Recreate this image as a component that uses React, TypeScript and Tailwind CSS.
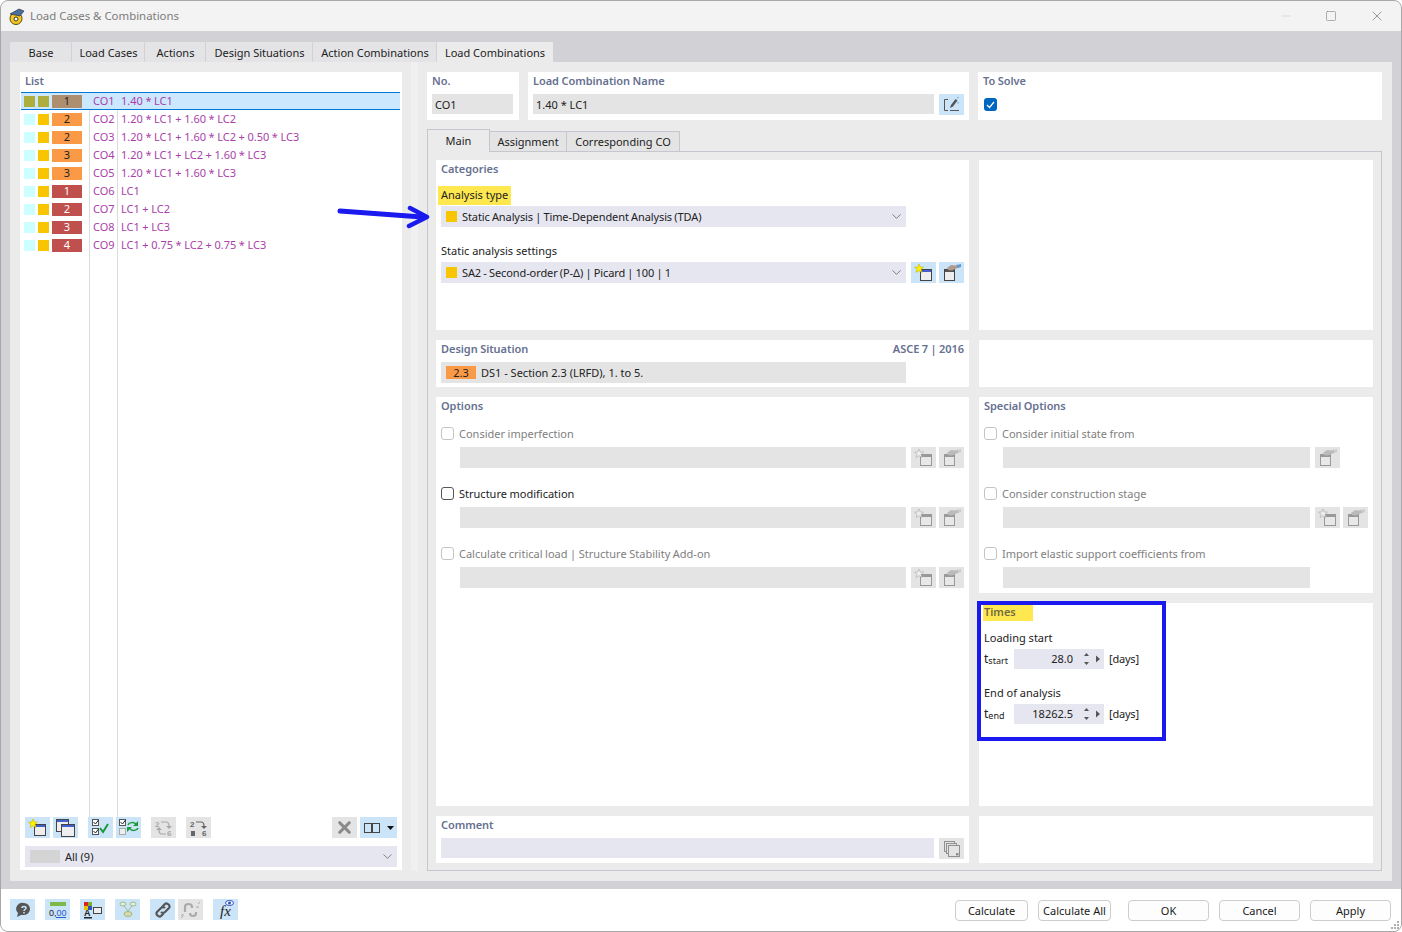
import React from 'react';
import { ChevronDown, Minus, Square, X } from 'lucide-react';

const rows = [
    { c1: '#aeae3e', c2: '#aeae3e', n: '1', bg: '#ad8f70', dark: true, co: 'CO1', f: '1.40 * LC1' },
    { c1: '#ccffff', c2: '#f8c600', n: '2', bg: '#fb9a46', dark: true, co: 'CO2', f: '1.20 * LC1 + 1.60 * LC2' },
    { c1: '#ccffff', c2: '#f8c600', n: '2', bg: '#fb9a46', dark: true, co: 'CO3', f: '1.20 * LC1 + 1.60 * LC2 + 0.50 * LC3' },
    { c1: '#ccffff', c2: '#f8c600', n: '3', bg: '#fb9a46', dark: true, co: 'CO4', f: '1.20 * LC1 + LC2 + 1.60 * LC3' },
    { c1: '#ccffff', c2: '#f8c600', n: '3', bg: '#fb9a46', dark: true, co: 'CO5', f: '1.20 * LC1 + 1.60 * LC3' },
    { c1: '#ccffff', c2: '#f8c600', n: '1', bg: '#c0504d', dark: false, co: 'CO6', f: 'LC1' },
    { c1: '#ccffff', c2: '#f8c600', n: '2', bg: '#c0504d', dark: false, co: 'CO7', f: 'LC1 + LC2' },
    { c1: '#ccffff', c2: '#f8c600', n: '3', bg: '#c0504d', dark: false, co: 'CO8', f: 'LC1 + LC3' },
    { c1: '#ccffff', c2: '#f8c600', n: '4', bg: '#c0504d', dark: false, co: 'CO9', f: 'LC1 + 0.75 * LC2 + 0.75 * LC3' },
];

// --- small toolbar drawings ---
const NewIcon = ({ off }: { off?: boolean }) => (
    <svg width="19" height="17" viewBox="0 0 19 17">
        <rect x="6.500" y="5.500" width="11" height="11" fill={off ? '#e8e8e8' : '#eee'} stroke={off ? '#999' : '#444'} />
        <rect x="7" y="6" width="10" height="2" fill={off ? '#999' : '#4060d0'} />
        <path d="M5 0l1.300 3 3.200.2-2.500 2.100.9 3.200L5 6.700 2.100 8.500 3 5.300.5 3.200l3.200-.2z" fill={off ? '#eee' : '#fff200'} stroke={off ? '#aaa' : '#c8b400'} strokeWidth=".6" />
    </svg>
);

const EditIcon = ({ off }: { off?: boolean }) => (
    <svg width="20" height="17" viewBox="0 0 20 17">
        <rect x="2.500" y="5.500" width="10" height="11" fill={off ? '#e8e8e8' : '#eee'} stroke={off ? '#999' : '#444'} />
        <rect x="3" y="6" width="9" height="2" fill={off ? '#999' : '#555'} />
        <path d="M5 4l4-3 4 .5 3-1 1 3-4 1.500-3 1.500-4-.5z" fill={off ? '#bbb' : '#b09a90'} />
        <path d="M15 1l4-1v3l-3 1z" fill={off ? '#ccc' : '#5a9ad8'} />
    </svg>
);

const PenIcon = () => (
    <svg width="18" height="16" viewBox="0 0 18 16" fill="none">
        <path d="M5 2.500H1.500v11H5M7 13.500h9" stroke="#555" />
        <path d="M7 11l1-3 4.500-6 2 1.500-4.500 6z" fill="#555" />
        <path d="M14 1l1.500-.5M15 5v1.500" stroke="#5a9ad8" />
    </svg>
);

const TwoWindows = () => (
    <svg width="19" height="18" viewBox="0 0 19 18" fill="none" stroke="#444">
        <rect x=".5" y=".5" width="12" height="12" fill="#eee" />
        <path d="M1 2h11" stroke="#4060d0" strokeWidth="2" />
        <rect x="5.500" y="5.500" width="13" height="12" fill="#eee" />
        <path d="M6 7h12" stroke="#4060d0" strokeWidth="2" />
    </svg>
);

const StackIcon = () => (
    <svg width="16" height="16" viewBox="0 0 16 16" fill="none" stroke="#909090">
        <rect x=".5" y=".5" width="10" height="10" fill="#e4e4e4" />
        <rect x="2.500" y="2.500" width="10" height="10" fill="#e4e4e4" />
        <rect x="4.500" y="4.500" width="11" height="11" fill="#e4e4e4" />
        <rect x="12" y="12" width="2.500" height="2.500" fill="#909090" stroke="none" />
    </svg>
);

const CheckAllIcon = () => (
    <svg width="18" height="17" viewBox="0 0 18 17" fill="none">
        <rect x=".5" y=".5" width="6" height="6" stroke="#555" fill="#fff" />
        <rect x=".5" y="9.500" width="6" height="6" stroke="#555" fill="#fff" />
        <path d="M1.500 3l2 2 3-4M1.500 12l2 2 3-4" stroke="#222" />
        <path d="M8 9l3 4 5-8" stroke="#1b9a3c" strokeWidth="2" />
    </svg>
);

const CheckSwapIcon = () => (
    <svg width="20" height="17" viewBox="0 0 20 17" fill="none">
        <rect x=".5" y=".5" width="6" height="6" stroke="#555" fill="#fff" />
        <rect x=".5" y="9.500" width="6" height="6" stroke="#aaa" fill="#eee" />
        <path d="M1.500 3l2 2 3-4" stroke="#222" />
        <path d="M9 6c1-3 6-3 8-1M19 9c-1 3-6 3-8 1" stroke="#1b9a3c" strokeWidth="1.500" />
        <path d="M19 2v5h-5zM8 13V8h5z" fill="#1b9a3c" />
    </svg>
);

const RenumberIcon = ({ dim }: { dim?: boolean }) => {
    const col = dim ? '#a8a8a8' : '#666';
    return (
        <svg width="20" height="18" viewBox="0 0 20 18" fill="none" stroke={col}>
            <text x="1" y="8" fontSize="8" fontWeight="bold" fontFamily="Liberation Sans" fill={col} stroke="none">2</text>
            <text x="13" y="17" fontSize="8" fontWeight="bold" fontFamily="Liberation Sans" fill={col} stroke="none">6</text>
            <path d="M7 3h5c2 0 3 1 3 4" strokeWidth="1.200" />
            <path d="M12 7h6l-3 3z" fill={col} stroke="none" />
            {dim ? (
                <>
                    <path d="M12 15H8c-2 0-3-1-3-4" strokeWidth="1.200" />
                    <path d="M2 11h6l-3-3z" fill={col} stroke="none" />
                </>
            ) : (
                <rect x="2" y="12" width="4" height="5" fill={col} stroke="none" />
            )}
        </svg>
    );
};

const LinkIcon = ({ broken }: { broken?: boolean }) => (
    <svg width="20" height="18" viewBox="0 0 20 18" fill="none" stroke={broken ? '#aaa' : '#555'} strokeWidth="2.200">
        {broken ? (
            <>
                <path d="M4 11V6c0-4 7-4 7 0v1M15 11v1c0 4-6 4-6 0" />
                <path d="M2 15l-2 2M17 3l2-2M15 6h3M3 14H0" strokeWidth="1" />
            </>
        ) : (
            <path d="M9 6l3-3c2-2 6 2 4 4l-4 4c-1 1-3 1-4 0M11 12l-3 3c-2 2-6-2-4-4l4-4c1-1 3-1 4 0" />
        )}
    </svg>
);

const ToolBtn = ({ children, off, className = 'w-[25px]' }: { children?: React.ReactNode; off?: boolean; className?: string }) => (
    <div className={`h-[21px] shrink-0 flex items-center justify-center ${off ? 'bg-[#e4e4e4]' : 'bg-[#cce4f7]'} ${className}`}>
        {children}
    </div>
);

const Section = ({ className = '', title, children }: { className?: string; title?: string; children?: React.ReactNode }) => (
    <div className={`bg-white px-[5px] ${className}`}>
        {title && <div className="h-[19px] pt-px leading-[15px] font-semibold text-[#667090] tracking-[-0.05px] [word-spacing:-0.300px]">{title}</div>}
        {children}
    </div>
);

const Combo = ({ text, className = '' }: { text: string; className?: string }) => (
    <div className={`h-[21px] w-[465px] bg-[#e6e6f0] flex items-center pl-[5px] pr-[2px] ${className}`}>
        <span className="w-[11px] h-[11px] bg-[#f8c600] mr-[5px]" />
        <span className="flex-1 text-[#222] tracking-[-0.100px] [word-spacing:-0.500px]">{text}</span>
        <ChevronDown size={15} strokeWidth={1} className="text-[#444]" />
    </div>
);

const CheckRow = ({ label, on, fieldW, buttons }: { label: string; on?: boolean; fieldW: string; buttons: ('new' | 'edit')[] }) => (
    <div className="h-[60px] pt-[11px]">
        <div className="flex items-center h-[13px]">
            <span className={`w-[13px] h-[13px] rounded-[3px] border bg-white ${on ? 'border-[#555]' : 'border-[#c4c4c4]'}`} />
            <span className={`ml-[5px] [word-spacing:-0.300px] ${on ? 'text-[#222]' : 'text-[#808080]'}`}>{label}</span>
        </div>
        <div className="flex mt-[7px] ml-[19px]">
            <div className={`h-[21px] bg-[#e4e4e4] ${fieldW}`} />
            <div className="flex gap-[3px] ml-[5px]">
                {buttons.map((b, i) => (
                    <ToolBtn key={i} off>{b === 'new' ? <NewIcon off /> : <EditIcon off />}</ToolBtn>
                ))}
            </div>
        </div>
    </div>
);

const Spinner = ({ sym, sub, value }: { sym: string; sub: string; value: string }) => (
    <div className="flex items-center h-[20px]">
        <span className="w-[30px] text-[#222] text-[12px]">{sym}<span className="text-[9px] relative top-px">{sub}</span></span>
        <div className="w-[90px] h-[20px] bg-[#e6e6f0] flex items-center justify-end pr-[3px]">
            <span className="text-[#222] mr-[8px]">{value}</span>
            <svg width="20" height="14" viewBox="0 0 20 14" fill="#555">
                <path d="M3 4l2.500-3L8 4zM3 10l2.500 3L8 10zM15 3.500l4 3.500-4 3.500z" />
            </svg>
        </div>
        <span className="ml-[5px] text-[#222] tracking-[-0.200px]">[days]</span>
    </div>
);

const Tab = ({ label, w }: { label: string; w: string }) => (
    <div className={`h-[20px] pt-[2px] pl-px flex items-center justify-center bg-[#e4e4e6] text-[#222] mr-px ${w}`}>{label}</div>
);

const FootBtn = ({ label, w, ml }: { label: string; w: string; ml: string }) => (
    <div className={`h-[21px] mt-px pt-px flex items-center justify-center rounded-[4px] border border-[#cdcdcd] bg-[#fdfdfd] text-[#1a1a1a] ${w} ${ml}`}>{label}</div>
);

export default function App() {
    return (
        <div
            className="relative w-[1402px] h-[932px] overflow-hidden rounded-[8px] border border-[#a8a8a8] bg-[#d2d2d6] flex flex-col text-[11px] leading-[14px]"
            style={{ fontFamily: '"Noto Sans", "Open Sans", sans-serif' }}
        >
            {/* title bar */}
            <div className="h-[30px] shrink-0 bg-[#f3f3f3] flex items-center pl-[7px] pr-[16px]">
                <svg width="17" height="17" viewBox="0 0 17 17">
                    <circle cx="8" cy="10.500" r="6" fill="#f4c81c" stroke="#5a4a10" />
                    <path d="M2 6l9-5 5 2-4 5z" fill="#4a6fa0" stroke="#223" strokeWidth=".6" />
                    <circle cx="8" cy="11" r="2" fill="#fff" stroke="#333" />
                </svg>
                <span className="ml-[5px] text-[11.400px] text-[#7b7b7b] flex-1">Load Cases &amp; Combinations</span>
                <Minus size={14} strokeWidth={1} className="text-[#c8c8c8] mr-[32px]" />
                <Square size={12} strokeWidth={1.200} className="text-[#808080] mr-[32px]" />
                <X size={16} strokeWidth={1.200} className="text-[#808080]" />
            </div>

            {/* top tabs */}
            <div className="h-[31px] shrink-0 pt-[11px] px-[9px] flex">
                <Tab label="Base" w="w-[61px]" />
                <Tab label="Load Cases" w="w-[72px]" />
                <Tab label="Actions" w="w-[60px]" />
                <Tab label="Design Situations" w="w-[106px]" />
                <Tab label="Action Combinations" w="w-[123px]" />
                <div className="h-[20px] pt-[2px] w-[116px] flex items-center justify-center bg-[#ebebeb] text-[#222]">Load Combinations</div>
            </div>

            {/* main area */}
            <div className="h-[819px] shrink-0 mx-[9px] bg-[#ebebeb] flex pt-[10px]">
                {/* left list */}
                <div className="w-[382px] h-[798px] ml-[10px] bg-white flex flex-col px-[5px] shrink-0">
                    <div className="h-[20px] pt-px leading-[15px] font-semibold text-[#667090]">List</div>
                    <div className="relative h-[725px] -mx-[4px]">
                        <div className="absolute top-0 bottom-0 left-[68px] w-px bg-[#dcdcdc]" />
                        <div className="absolute top-0 bottom-0 left-[96px] w-px bg-[#dcdcdc]" />
                        {rows.map((r, i) => (
                            <div
                                key={r.co}
                                className={`relative h-[18px] flex items-center text-[#a93fa9] ${i === 0 ? 'bg-[#cce8ff] border-y border-[#0078d4] mr-px' : ''}`}
                            >
                                <span className="w-[11px] h-[11px] ml-[3px]" style={{ backgroundColor: r.c1 }} />
                                <span className="w-[11px] h-[11px] ml-[3px]" style={{ backgroundColor: r.c2 }} />
                                <span
                                    className={`w-[30px] h-[13px] ml-[3px] flex items-center justify-center ${r.dark ? 'text-[#222]' : 'text-white'}`}
                                    style={{ backgroundColor: r.bg }}
                                >
                                    {r.n}
                                </span>
                                <span className="w-[28px] ml-[11px]">{r.co}</span>
                                <span className="[word-spacing:-0.300px]">{r.f}</span>
                            </div>
                        ))}
                    </div>
                    <div className="flex">
                        <ToolBtn><NewIcon /></ToolBtn>
                        <ToolBtn className="w-[25px] ml-[3px]"><TwoWindows /></ToolBtn>
                        <ToolBtn className="w-[25px] ml-[10px]"><CheckAllIcon /></ToolBtn>
                        <ToolBtn className="w-[25px] ml-[3px]"><CheckSwapIcon /></ToolBtn>
                        <ToolBtn off className="w-[25px] ml-[10px]"><RenumberIcon dim /></ToolBtn>
                        <ToolBtn off className="w-[25px] ml-[10px]"><RenumberIcon /></ToolBtn>
                        <ToolBtn off className="w-[25px] ml-auto">
                            <X size={19} strokeWidth={4} className="text-[#8a8a8a]" />
                        </ToolBtn>
                        <ToolBtn className="w-[37px] ml-[3px] gap-[7px]">
                            <svg width="16" height="10" viewBox="0 0 16 10" fill="none" stroke="#444">
                                <rect x=".5" y=".5" width="7" height="9" />
                                <rect x="8.500" y=".5" width="7" height="9" />
                            </svg>
                            <svg width="7" height="4" viewBox="0 0 7 4"><path d="M0 0h7L3.500 4z" fill="#111" /></svg>
                        </ToolBtn>
                    </div>
                    <div className="h-[21px] mt-[8px] bg-[#e6e6f0] flex items-center pl-[5px] pr-[2px]">
                        <span className="w-[30px] h-[13px] bg-[#d4d4d4] mr-[5px]" />
                        <span className="flex-1 text-[#222]">All (9)</span>
                        <ChevronDown size={15} strokeWidth={1} className="text-[#444]" />
                    </div>
                </div>

                {/* splitter */}
                <div className="w-[7px] h-[809px] ml-[9px] -mt-[10px] bg-[#f0f0f0] shrink-0" />

                {/* right side */}
                <div className="ml-[9px] flex-1 min-w-0 pr-[8px]">
                    <div className="flex h-[48px]">
                        <Section title="No." className="w-[92px]">
                            <div className="h-[20px] mt-[3px] pt-px w-[81px] bg-[#e4e4e4] flex items-center pl-[3px] text-[#222]">CO1</div>
                        </Section>
                        <Section title="Load Combination Name" className="w-[441px] ml-[9px]">
                            <div className="flex mt-[3px]">
                                <div className="h-[20px] pt-px w-[401px] bg-[#e4e4e4] flex items-center pl-[3px] text-[#222]">1.40 * LC1</div>
                                <ToolBtn className="w-[25px] ml-[5px]"><PenIcon /></ToolBtn>
                            </div>
                        </Section>
                        <Section title="To Solve" className="w-[404px] ml-[9px]">
                            <div className="w-[13px] h-[13px] mt-[7px] ml-px rounded-[3px] bg-[#0067c0] flex items-center justify-center">
                                <svg width="9" height="8" viewBox="0 0 9 8" fill="none" stroke="#fff" strokeWidth="1.200"><path d="M1 4l2.500 2.500L8 1" /></svg>
                            </div>
                        </Section>
                    </div>

                    {/* inner tabs */}
                    <div className="flex items-end h-[22px] mt-[9px] relative z-10">
                        <div className="w-[63px] h-[23px] -mb-px bg-[#ebebeb] border border-b-0 border-[#c6c6ce] flex items-center justify-center text-[#222]">Main</div>
                        <div className="w-[77px] h-[20px] bg-[#e4e4e4] border-t border-r border-[#c6c6ce] flex items-center justify-center text-[#222]">Assignment</div>
                        <div className="w-[113px] h-[20px] bg-[#e4e4e4] border-t border-r border-[#c6c6ce] flex items-center justify-center text-[#222]">Corresponding CO</div>
                    </div>
                    <div className="w-[955px] h-[720px] border border-[#c6c6ce] pl-[8px] pt-[8px]">
                        <div className="flex gap-[10px]">
                            <div className="w-[533px] flex flex-col gap-[10px] shrink-0">
                                <Section title="Categories" className="h-[170px]">
                                    <div className="w-[73px] h-[19px] pb-px -ml-[3px] mt-[7px] bg-[#ffe84f] pl-[3px] flex items-center text-[#222]">Analysis type</div>
                                    <Combo text="Static Analysis | Time-Dependent Analysis (TDA)" className="mt-px" />
                                    <div className="mt-[17px] h-[14px] text-[#222]">Static analysis settings</div>
                                    <div className="flex mt-[4px]">
                                        <Combo text="SA2 - Second-order (P-Δ) | Picard | 100 | 1" />
                                        <div className="flex gap-[3px] ml-[5px]">
                                            <ToolBtn><NewIcon /></ToolBtn>
                                            <ToolBtn><EditIcon /></ToolBtn>
                                        </div>
                                    </div>
                                </Section>
                                <Section className="h-[47px]">
                                    <div className="h-[22px] pt-[2px] flex justify-between font-semibold text-[#667090] tracking-[-0.050px] [word-spacing:-0.300px]">
                                        <span>Design Situation</span>
                                        <span>ASCE 7 | 2016</span>
                                    </div>
                                    <div className="h-[21px] w-[465px] bg-[#e4e4e4] flex items-center pl-[5px] text-[#222]">
                                        <span className="w-[30px] h-[13px] bg-[#fb9a46] mr-[5px] flex items-center justify-center">2.3</span>
                                        DS1 - Section 2.3 (LRFD), 1. to 5.
                                    </div>
                                </Section>
                                <Section title="Options" className="h-[409px]">
                                    <CheckRow label="Consider imperfection" fieldW="w-[446px]" buttons={['new', 'edit']} />
                                    <CheckRow label="Structure modification" on fieldW="w-[446px]" buttons={['new', 'edit']} />
                                    <CheckRow label="Calculate critical load | Structure Stability Add-on" fieldW="w-[446px]" buttons={['new', 'edit']} />
                                </Section>
                                <Section title="Comment" className="h-[47px]">
                                    <div className="flex mt-[3px]">
                                        <div className="h-[20px] w-[493px] bg-[#e6e6f0]" />
                                        <ToolBtn off className="w-[25px] ml-[5px]"><StackIcon /></ToolBtn>
                                    </div>
                                </Section>
                            </div>

                            <div className="w-[394px] flex flex-col gap-[10px] shrink-0">
                                <Section className="h-[170px]" />
                                <Section className="h-[47px]" />
                                <Section title="Special Options" className="h-[196px]">
                                    <CheckRow label="Consider initial state from" fieldW="w-[307px]" buttons={['edit']} />
                                    <CheckRow label="Consider construction stage" fieldW="w-[307px]" buttons={['new', 'edit']} />
                                    <CheckRow label="Import elastic support coefficients from" fieldW="w-[307px]" buttons={[]} />
                                </Section>
                                <Section className="h-[203px]">
                                    <div className="w-[50px] h-[16px] pb-[2px] -ml-[1px] mt-[2px] bg-[#ffe84f] pl-px flex items-center font-semibold text-[#6f6b45]">Times</div>
                                    <div className="mt-[10px] h-[14px] text-[#222]">Loading start</div>
                                    <div className="mt-[4px]"><Spinner sym="t" sub="start" value="28.0" /></div>
                                    <div className="mt-[17px] h-[14px] text-[#222]">End of analysis</div>
                                    <div className="mt-[4px]"><Spinner sym="t" sub="end" value="18262.5" /></div>
                                </Section>
                                <Section className="h-[47px]" />
                            </div>
                        </div>
                    </div>
                </div>
            </div>

            {/* bottom bar */}
            <div className="h-[8px] shrink-0" />
            <div className="flex-1 bg-white flex items-start pt-[10px] pl-[9px] pr-[10px]">
                <ToolBtn>
                    <svg width="16" height="16" viewBox="0 0 16 16"><path d="M9 1a6 6 0 0 1 0 12H6l-4 2 1-4A6 6 0 0 1 9 1z" fill="#555" /><path d="M7 6c0-2 4-2 4 0 0 1.500-2 1.500-2 3M9 10v1.500" stroke="#cce4f7" strokeWidth="1.500" fill="none" /></svg>
                </ToolBtn>
                <ToolBtn className="w-[25px] ml-[10px]">
                    <svg width="20" height="18" viewBox="0 0 20 18">
                        <rect x="2" y="1" width="16" height="4" fill="#7cb84a" />
                        <rect x="8" y="16" width="10" height="1" fill="#2a5ed0" />
                        <text x="1" y="14.500" fontSize="9" fontFamily="Liberation Sans" fill="#222">0,<tspan fill="#2a5ed0">00</tspan></text>
                    </svg>
                </ToolBtn>
                <ToolBtn className="w-[25px] ml-[10px]">
                    <svg width="20" height="18" viewBox="0 0 20 18">
                        <rect x="1" y="1" width="4" height="4" fill="#d22" /><rect x="5" y="1" width="4" height="4" fill="#7cb030" /><rect x="1" y="5" width="4" height="4" fill="#e8c000" /><rect x="5" y="5" width="4" height="4" fill="#3050c0" />
                        <text x="1" y="15" fontSize="9" fontWeight="bold" fontFamily="Liberation Sans" fill="#222">A</text>
                        <rect x="10.500" y="6.500" width="8" height="6" fill="#eee" stroke="#444" />
                        <rect x="1" y="16" width="8" height="1.500" fill="#222" />
                    </svg>
                </ToolBtn>
                <ToolBtn className="w-[25px] ml-[10px]">
                    <svg width="18" height="18" viewBox="0 0 18 18" fill="none" stroke="#9bbb8a">
                        <ellipse cx="4" cy="3" rx="3" ry="2" fill="#e0eee0" /><ellipse cx="14" cy="3" rx="3" ry="2" fill="#e0eee0" />
                        <path d="M5 5l4 5M13 5l-4 5" />
                        <ellipse cx="9" cy="13" rx="4" ry="2.500" fill="#d8d8a8" />
                    </svg>
                </ToolBtn>
                <ToolBtn className="w-[25px] ml-[10px]"><LinkIcon /></ToolBtn>
                <ToolBtn off className="w-[25px] ml-[3px]"><LinkIcon broken /></ToolBtn>
                <ToolBtn className="w-[25px] ml-[10px] relative">
                    <span className="italic text-[15px] text-[#222] pt-[2px]" style={{ fontFamily: '"Liberation Serif", serif' }}>fx</span>
                    <svg className="absolute right-[4px] top-px" width="9" height="6" viewBox="0 0 9 6"><ellipse cx="4.500" cy="3" rx="4" ry="2.500" fill="#fff" stroke="#3050c0" /><circle cx="4.500" cy="3" r="1.500" fill="#3050c0" /></svg>
                </ToolBtn>
                <div className="flex-1" />
                <FootBtn label="Calculate" w="w-[73px]" ml="ml-0" />
                <FootBtn label="Calculate All" w="w-[73px]" ml="ml-[10px]" />
                <FootBtn label="OK" w="w-[81px]" ml="ml-[17px]" />
                <FootBtn label="Cancel" w="w-[81px]" ml="ml-[10px]" />
                <FootBtn label="Apply" w="w-[81px]" ml="ml-[10px]" />
            </div>

            {/* resize grip */}
            <svg className="absolute right-px bottom-px" width="10" height="10" viewBox="0 0 10 10" fill="#b0b0b0">
                <rect x="7" y="1" width="2" height="2" /><rect x="4" y="4" width="2" height="2" /><rect x="7" y="4" width="2" height="2" />
                <rect x="1" y="7" width="2" height="2" /><rect x="4" y="7" width="2" height="2" /><rect x="7" y="7" width="2" height="2" />
            </svg>

            {/* annotations painted over the screenshot */}
            <svg className="absolute left-[336px] top-[202px]" width="94" height="26" viewBox="0 0 94 26" fill="none">
                <path d="M3 8l82 6" stroke="#1a1aee" strokeWidth="5" strokeLinecap="round" />
                <path d="M73 5l17 9-18 9" stroke="#1a1aee" strokeWidth="4.500" strokeLinecap="round" strokeLinejoin="round" />
            </svg>
            <div className="absolute left-[976px] top-[600px] w-[189px] h-[140px] border-[4px] border-[#1a1aee]" />
        </div>
    );
}
